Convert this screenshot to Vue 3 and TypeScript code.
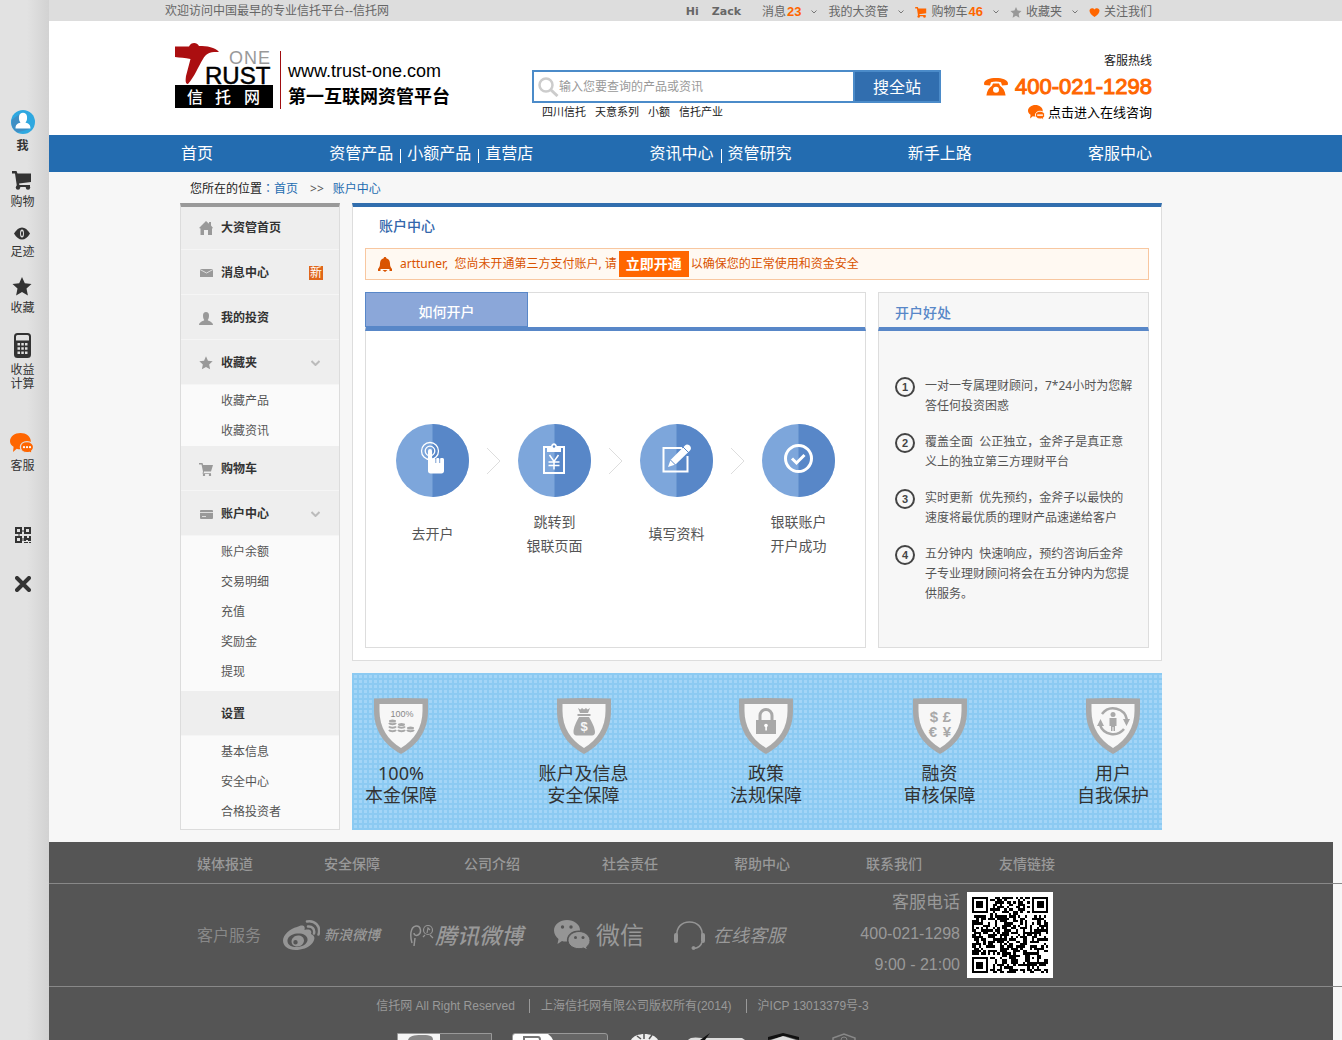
<script setup lang="ts">
import { ref } from 'vue'

interface MenuGroup {
  label: string
  icon?: string
  badge?: string
  open?: boolean
  roomy?: boolean
  children?: string[]
}

const keyword = ref('')

const navGroups: string[][] = [
  ['首页'],
  ['资管产品', '小额产品', '直营店'],
  ['资讯中心', '资管研究'],
  ['新手上路'],
  ['客服中心'],
]

const hotWords = ['四川信托', '天意系列', '小额', '信托产业']

const menu: MenuGroup[] = [
  { label: '大资管首页', icon: 'home' },
  { label: '消息中心', icon: 'mail', badge: '新' },
  { label: '我的投资', icon: 'user' },
  { label: '收藏夹', icon: 'star', open: true, children: ['收藏产品', '收藏资讯'] },
  { label: '购物车', icon: 'cart' },
  {
    label: '账户中心',
    icon: 'card',
    open: true,
    roomy: true,
    children: ['账户余额', '交易明细', '充值', '奖励金', '提现'],
  },
  { label: '设置', roomy: true, children: ['基本信息', '安全中心', '合格投资者'] },
]

const steps = [
  { icon: 'touch', lines: ['去开户'] },
  { icon: 'form', lines: ['跳转到', '银联页面'] },
  { icon: 'edit', lines: ['填写资料'] },
  { icon: 'done', lines: ['银联账户', '开户成功'] },
]

const benefits = [
  '一对一专属理财顾问，7*24小时为您解\n答任何投资困惑',
  '覆盖全面  公正独立，金斧子是真正意\n义上的独立第三方理财平台',
  '实时更新  优先预约，金斧子以最快的\n速度将最优质的理财产品速递给客户',
  '五分钟内  快速响应，预约咨询后金斧\n子专业理财顾问将会在五分钟内为您提\n供服务。',
]

const guarantees = [
  { icon: 'coins', lines: ['100%', '本金保障'] },
  { icon: 'bag', lines: ['账户及信息', '安全保障'] },
  { icon: 'lock', lines: ['政策', '法规保障'] },
  { icon: 'money', lines: ['融资', '审核保障'] },
  { icon: 'self', lines: ['用户', '自我保护'] },
]

const footLinks = ['媒体报道', '安全保障', '公司介绍', '社会责任', '帮助中心', '联系我们', '友情链接']

const QR_SIZE = 33

function ring(x: number, y: number, cx: number, cy: number): number {
  return Math.max(Math.abs(x - cx), Math.abs(y - cy))
}

function buildQr(): string {
  let seed = 20141
  let d = ''
  const last = QR_SIZE - 4
  for (let y = 0; y < QR_SIZE; y++) {
    for (let x = 0; x < QR_SIZE; x++) {
      seed = (seed * 1103515245 + 12345) % 2147483648
      let on = seed / 2147483648 > 0.48
      const finder = Math.min(ring(x, y, 3, 3), ring(x, y, last, 3), ring(x, y, 3, last))
      const align = ring(x, y, 26, 26)
      if (finder <= 4) on = finder <= 1 || finder === 3
      else if (align <= 2) on = align !== 1
      if (on) d += `M${x} ${y}h1v1h-1z`
    }
  }
  return d
}

const qrPath = buildQr()
</script>

<template>
  <div class="page">
    <aside class="rail" aria-label="快捷工具">
      <a href="#" class="tool tool--me">
        <svg width="24" height="24" viewBox="0 0 24 24"><circle cx="12" cy="12" r="12" fill="#2fa8e0" /><path d="M9 4 1 9.500a12 12 0 0 0 5 12.900L19 19z" fill="#3f8fc4" /><path d="M4.500 18.500c0-4 2-5 5-6C8 11 7.800 9 8 6.500 8.300 4 9.800 2.800 12 2.800s3.700 1.200 4 3.700c.2 2.500 0 4.500-1.500 6 3 1 5 2 5 6z" fill="#fff" /></svg>
        <span>我</span>
      </a>
      <a href="#" class="tool">
        <svg width="20" height="19" viewBox="0 0 20 19" fill="#333"><path d="M0 0h4.500l1 2.500H19V11L7 12.500l.4 1.500H18v2H5L3 2.500H0z" /><circle cx="6" cy="16.500" r="2.200" /><circle cx="16" cy="16.500" r="2.200" /></svg>
        <span>购物</span>
      </a>
      <a href="#" class="tool">
        <svg width="16" height="13" viewBox="0 0 16 13"><path d="M0 6.500C2.500 2.500 5 .5 8 .5s5.500 2 8 6c-2.500 4-5 6-8 6s-5.500-2-8-6z" fill="#333" /><ellipse cx="8" cy="6.500" rx="2" ry="4" fill="#e0e0e0" /><ellipse cx="8" cy="6.500" rx="1" ry="2.500" fill="#333" /></svg>
        <span>足迹</span>
      </a>
      <a href="#" class="tool">
        <svg width="20" height="19" viewBox="0 0 20 19"><path d="m10 0 2.800 6.200 6.700.8-5 4.600 1.400 6.900L10 15.100l-5.900 3.400 1.400-6.900L.5 7l6.700-.8z" fill="#333" /></svg>
        <span>收藏</span>
      </a>
      <a href="#" class="tool">
        <svg width="17" height="25" viewBox="0 0 17 25"><rect x="1" y="1" width="15" height="23" rx="2.500" fill="none" stroke="#333" stroke-width="2" /><path d="M2 7.500h13V23H2z" fill="#333" /><path d="M3.500 10h2.500v2.500H3.500zM7.300 10h2.500v2.500H7.300zM11 10h2.500v2.500H11zM3.500 14.200h2.500v2.500H3.500zM7.300 14.200h2.500v2.500H7.300zM11 14.200h2.500v2.500H11zM3.500 18.400h2.500v2.500H3.500zM7.300 18.400h2.500v2.500H7.300zM11 18.400h2.500v2.500H11z" fill="#e0e0e0" /></svg>
        <span>收益<br />计算</span>
      </a>
      <a href="#" class="tool tool--chat">
        <svg width="24" height="21" viewBox="0 0 24 21"><path d="M10.500 0C16 0 20.800 3.400 20.800 8.200S16 16.300 10.500 16.300c-1.500 0-2.600-.2-3.800-.6L3 19l.6-5.200C1.500 12.500 0 10.500 0 8.200 0 3.400 4.800 0 10.500 0z" fill="#ff6600" /><path d="M17 8.700c3.900 0 6.600 2.400 6.600 5.400 0 1.700-.7 3-1.900 4l.5 2.600-2.700-1.300c-.8.200-1.600.3-2.500.3-3.900 0-6.600-2.400-6.600-5.600s2.700-5.400 6.600-5.400z" fill="#ff6600" stroke="#e0e0e0" stroke-width="1.300" /><circle cx="14" cy="14.200" r="1.100" fill="#fff" /><circle cx="17" cy="14.200" r="1.100" fill="#fff" /><circle cx="20" cy="14.200" r="1.100" fill="#fff" /></svg>
        <span>客服</span>
      </a>
      <a href="#" class="tool tool--qr" aria-label="二维码">
        <svg width="16" height="16" viewBox="0 0 16 16"><path fill="#333" fill-rule="evenodd" d="M0 0h7v7H0zM2 2v3h3V2zM9 0h7v7H9zM11 2v3h3V2zM0 9h7v7H0zM2 11v3h3v-3zM9 9h3v2h2V9h2v5h-3v-1h-2v1H9zM9 15h4v1H9zM14 15h2v1h-2zM7.500 3h1v2h-1zM3 7.500h2v1H3zM7.500 11h1v3h-1z" /></svg>
      </a>
      <button type="button" class="tool tool--close" aria-label="关闭">
        <svg width="16" height="16" viewBox="0 0 16 16"><path d="m2 2 12 12M14 2 2 14" stroke="#333" stroke-width="4" stroke-linecap="round" /></svg>
      </button>
    </aside>

    <div class="topbar">
      <div class="wide topbar__in">
        <span>欢迎访问中国最早的专业信托平台--信托网</span>
        <div class="topbar__links">
          <span class="hi">Hi</span>
          <a href="#" class="hi hi--name">Zack</a>
          <a href="#">消息<b>23</b></a>
          <svg class="caret" width="6" height="4" viewBox="0 0 6 4"><path d="m.5.5 2.500 2.500L5.500.5" fill="none" stroke="#777" /></svg>
          <a href="#">我的大资管</a>
          <svg class="caret" width="6" height="4" viewBox="0 0 6 4"><path d="m.5.5 2.500 2.500L5.500.5" fill="none" stroke="#777" /></svg>
          <a href="#"><svg width="12" height="11" viewBox="0 0 20 19" fill="#ff6600"><path d="M0 0h4.500l1 2.500H19V11L7 12.500l.4 1.500H18v2H5L3 2.500H0z" /><circle cx="6" cy="16.500" r="2.200" /><circle cx="16" cy="16.500" r="2.200" /></svg>购物车<b>46</b></a>
          <svg class="caret" width="6" height="4" viewBox="0 0 6 4"><path d="m.5.5 2.500 2.500L5.500.5" fill="none" stroke="#777" /></svg>
          <a href="#"><svg width="12" height="11" viewBox="0 0 20 19"><path d="m10 0 2.800 6.200 6.700.8-5 4.600 1.400 6.900L10 15.100l-5.900 3.400 1.400-6.900L.5 7l6.700-.8z" fill="#999" /></svg>收藏夹</a>
          <svg class="caret" width="6" height="4" viewBox="0 0 6 4"><path d="m.5.5 2.500 2.500L5.500.5" fill="none" stroke="#777" /></svg>
          <a href="#"><svg width="11" height="9" viewBox="0 0 11 9"><path d="M5.500 9C2.500 7 .5 5 .5 2.800.5 1.200 1.600.2 3 .2c1.100 0 2 .5 2.500 1.400C6 .7 6.900.2 8 .2c1.400 0 2.500 1 2.500 2.600C10.500 5 8.500 7 5.500 9z" fill="#ff6600" /></svg>关注我们</a>
        </div>
      </div>
    </div>

    <header class="header">
      <div class="wide header__in">
        <a href="#" class="brand">
          <svg class="brand__logo" width="98" height="66" viewBox="0 0 98 66">
            <path d="M0 3.500h14c2-4.500 8-4.500 10-.5 8 0 16 1 20 6-8-.5-13 1-16 7-5 8-8 17-15 25-3 0-2.500-4-2-8L15.500 16C10 14.500 5 15 0 14z" fill="#ab0e10" />
            <text x="54" y="21" font-size="18" letter-spacing="1" fill="#999">ONE</text>
            <text x="30" y="41" font-size="24" fill="#000" stroke="#000" stroke-width=".5">RUST</text>
            <path d="M0 42h98v23H0z" fill="#000" />
            <text class="cjk" x="12 40 69" y="60" font-size="16" font-weight="500" fill="#fff">信托网</text>
          </svg>
          <span class="brand__text">
            <span class="brand__url">www.trust-one.com</span>
            <strong>第一互联网资管平台</strong>
          </span>
        </a>

        <div class="search">
          <form class="search__box" @submit.prevent>
            <svg width="21" height="20" viewBox="0 0 21 20" fill="none" stroke="#ccc"><circle cx="8" cy="8" r="6.500" stroke-width="2.500" /><path d="m13 13 6.500 6" stroke-width="3" /></svg>
            <input v-model="keyword" type="text" aria-label="搜索" placeholder="输入您要查询的产品或资讯" />
            <button type="submit">搜全站</button>
          </form>
          <div class="search__hot">
            <a v-for="w in hotWords" :key="w" href="#">{{ w }}</a>
          </div>
        </div>

        <div class="hotline">
          <span>客服热线</span>
          <strong>
            <svg width="24" height="18" viewBox="0 0 24 18"><path d="M12 0c6.500 0 11 1.700 12 5l-.3 2-5.700.5-1-3.200c-3-1-7-1-10 0L6 7.500.3 7 0 5C1 1.700 5.500 0 12 0z" fill="#ff6600" /><path d="M9 5.500h6l1 2.200c3 2 5 5 5.600 9.800H2.400C3 12.700 5 9.700 8 7.700z" fill="#ff6600" /><circle cx="12" cy="11.700" r="3" fill="#fff" /></svg>
            400-021-1298
          </strong>
          <a href="#">
            <svg width="17" height="15" viewBox="0 0 24 21"><path d="M10.500 0C16 0 20.800 3.400 20.800 8.200S16 16.300 10.500 16.300c-1.500 0-2.600-.2-3.800-.6L3 19l.6-5.200C1.500 12.500 0 10.500 0 8.200 0 3.400 4.800 0 10.500 0z" fill="#ff6600" /><path d="M17 8.700c3.900 0 6.600 2.400 6.600 5.400 0 1.700-.7 3-1.900 4l.5 2.600-2.700-1.300c-.8.200-1.600.3-2.500.3-3.900 0-6.600-2.400-6.600-5.600s2.700-5.400 6.600-5.400z" fill="#ff6600" stroke="#fff" stroke-width="1.300" /><path d="M13 14.200h8" stroke="#fff" stroke-width="2" /></svg>
            点击进入在线咨询
          </a>
        </div>
      </div>
    </header>

    <nav class="nav">
      <div class="wide nav__in">
        <div v-for="(g, i) in navGroups" :key="i" class="nav__group">
          <a v-for="n in g" :key="n" href="#">{{ n }}</a>
        </div>
      </div>
    </nav>

    <div class="shell">
      <div class="crumbs">
        <span>您所在的位置</span><a href="#"><span class="colon">：</span>首页</a><i>&gt;&gt;</i><a href="#">账户中心</a>
      </div>

      <div class="columns">
        <aside class="side">
          <template v-for="g in menu" :key="g.label">
            <a href="#" class="side__head">
              <span class="side__icon">
                <svg v-if="g.icon === 'home'" width="14" height="14" viewBox="0 0 14 14"><path d="m7 0 3 2.800V1h2v3.600L14 7l-1 .6V14H9V9H5v5H1.500V7.600L0 7z" /></svg>
                <svg v-else-if="g.icon === 'mail'" width="13" height="8" viewBox="0 0 13 8"><path d="M0 0h13v8H0z" /><path d="M0 .5 6.500 4 13 .5" fill="none" stroke="#ddd" /></svg>
                <svg v-else-if="g.icon === 'user'" width="14" height="13" viewBox="0 0 14 13"><path d="M7 0c2 0 3 1.500 3 3.500S9.500 7 8.700 8c0 1 5.300 1.500 5.300 5H0c0-3.500 5.300-4 5.300-5C4.500 7 4 5.500 4 3.500S5 0 7 0z" /></svg>
                <svg v-else-if="g.icon === 'star'" width="14" height="14" viewBox="0 0 20 19"><path d="m10 0 2.800 6.200 6.700.8-5 4.600 1.400 6.900L10 15.100l-5.900 3.400 1.400-6.900L.5 7l6.700-.8z" /></svg>
                <svg v-else-if="g.icon === 'cart'" width="14" height="13" viewBox="0 0 14 13"><path d="M0 0h3.500l.7 2H14l-2 6.500H5L4.700 10H12v.8H3.500L4 8.500 2.500 1.500H0z" /><circle cx="5" cy="12" r="1.200" /><circle cx="11" cy="12" r="1.200" /></svg>
                <svg v-else-if="g.icon === 'card'" width="13" height="9" viewBox="0 0 13 9"><rect width="13" height="9" rx="1" /><path d="M0 2.500h13M2 6.500h4" stroke="#ddd" /></svg>
              </span>
              {{ g.label }}
              <em v-if="g.badge">{{ g.badge }}</em>
              <svg v-if="g.open" class="side__caret" width="9" height="6" viewBox="0 0 9 6"><path d="m.5 1 4 4 4-4" fill="none" stroke="#bbb" stroke-width="2" /></svg>
            </a>
            <ul v-if="g.children" class="side__sub" :class="{ 'side__sub--roomy': g.roomy }">
              <li v-for="c in g.children" :key="c"><a href="#">{{ c }}</a></li>
            </ul>
          </template>
        </aside>

        <main class="main">
          <section class="card">
            <h1>账户中心</h1>
            <div class="alert">
              <svg width="14" height="15" viewBox="0 0 14 15" fill="#d95300"><path d="M7 0c.8 0 1.300.5 1.300 1.200C10.700 1.800 12 3.700 12 6.500c0 2.500.5 3.500 2 5.500H0c1.500-2 2-3 2-5.500 0-2.800 1.300-4.700 3.700-5.300C5.700.5 6.200 0 7 0z" /><path d="M0 12h2.500v2H0zM11.500 12H14v2h-2.500zM4.500 13h5L7 15z" /></svg>
              <span class="alert__text">arttuner,&nbsp; 您尚未开通第三方支付账户, 请</span>
              <button type="button">立即开通</button>
              <span>以确保您的正常使用和资金安全</span>
            </div>

            <div class="panels">
              <section class="panel panel--steps">
                <div class="panel__head"><button type="button" class="tab">如何开户</button></div>
                <div class="panel__body steps">
                  <template v-for="(s, i) in steps" :key="s.icon">
                    <svg v-if="i > 0" class="steps__arrow" width="15" height="28" viewBox="0 0 15 28"><path d="m1 1 13 13L1 27" fill="none" stroke="#ddd" /></svg>
                    <div class="step">
                      <svg width="73" height="73" viewBox="0 0 73 73">
                        <circle cx="36.500" cy="36.500" r="36.500" fill="#7da6db" />
                        <path d="M36.500 0a36.500 36.500 0 0 1 0 73z" fill="#5887c8" />
                        <g v-if="s.icon === 'touch'">
                          <circle cx="34" cy="27" r="8.500" fill="none" stroke="#fff" stroke-width="1.300" />
                          <circle cx="34" cy="27" r="4.800" fill="none" stroke="#fff" stroke-width="1.300" />
                          <path d="M32 27a2 2 0 0 1 4 0v8c.5-1.300 3.500-1.300 3.800 0 .5-1.300 3.500-1.300 3.800 0 .6-1.300 4.400-1.300 4.400.5V47c0 1.500-1 2.500-2.500 2.500h-11c-1.500 0-2.500-1-2.500-2.500z" fill="#fff" />
                          <path d="M39.800 34v5M43.700 34v5" stroke="#5887c8" stroke-width=".8" />
                        </g>
                        <g v-else-if="s.icon === 'form'" fill="none" stroke="#fff">
                          <rect x="26" y="23" width="20" height="26" stroke-width="2" />
                          <path d="M29 28v-5h4c0-5 6-5 6 0h4v5z" fill="#fff" stroke="none" />
                          <circle cx="36" cy="22.500" r="1.200" fill="#5887c8" stroke="none" />
                          <path d="m31.500 31 4.500 6.500 4.500-6.500M36 37v8.500M30.500 38h11M30.500 41.500h11" stroke-width="1.500" />
                        </g>
                        <g v-else-if="s.icon === 'edit'">
                          <path d="M42 24H23.500v23.500h24V32" fill="none" stroke="#fff" stroke-width="2" />
                          <path d="m28 43 2.500-7L45 21.500c3-3 8 2 5 5L35.500 40.500z" fill="#fff" />
                          <path d="m43 23 6 6M30.500 36l5 5" stroke="#5887c8" />
                        </g>
                        <g v-else fill="none" stroke="#fff">
                          <circle cx="36.500" cy="34.500" r="13" stroke-width="3" />
                          <path d="m30 34.500 4.500 4.500 8-8" stroke-width="3" />
                        </g>
                      </svg>
                      <p><span v-for="l in s.lines" :key="l">{{ l }}</span></p>
                    </div>
                  </template>
                </div>
              </section>

              <section class="panel panel--why">
                <h2 class="panel__head">开户好处</h2>
                <ol class="panel__body why">
                  <li v-for="(b, i) in benefits" :key="i"><b>{{ i + 1 }}</b><p>{{ b }}</p></li>
                </ol>
              </section>
            </div>
          </section>

          <section class="banner">
            <div v-for="g in guarantees" :key="g.icon" class="pledge">
              <svg width="54" height="56" viewBox="0 0 54 56">
                <path d="M0 .5Q27-.5 54 .5V13c0 19-10 34-27 43C10 47 0 32 0 13z" fill="#a8a8a8" />
                <path d="M5.500 6h43v7c0 16-8 29-21.500 37C13.500 42 5.500 29 5.500 13z" fill="#f7f7f7" />
                <g v-if="g.icon === 'coins'" fill="#a8a8a8">
                  <text x="28" y="19" font-size="9" text-anchor="middle" fill="#888">100%</text>
                  <g fill="none" stroke="#a8a8a8" stroke-width="2"><path d="M15 25c1 1.500 6 1.500 7 0M15 28.500c1 1.500 6 1.500 7 0M15 32c1 1.500 6 1.500 7 0M24 28.500c1 1.500 6 1.500 7 0M24 32c1 1.500 6 1.500 7 0M33 32c1 1.500 6 1.500 7 0" /></g>
                  <ellipse cx="18.500" cy="23" rx="3.500" ry="1.500" /><ellipse cx="27.500" cy="26.500" rx="3.500" ry="1.500" /><ellipse cx="36.500" cy="30" rx="3.500" ry="1.500" />
                </g>
                <g v-else-if="g.icon === 'bag'" fill="#a8a8a8">
                  <path d="M21 10l2.500 1.500L25 10l2 1.500 2-1.500 1.500 1.500L33 10l-2 5h-8zM20.500 16h13v2h-13zM22 19h10c3 5 6 11 6 15 0 2-1 3.500-3 3.500H19.500c-2 0-3-1.500-3-3.500 0-4 2.500-10 5.500-15z" />
                  <text x="27" y="33" font-size="13" font-weight="700" text-anchor="middle" fill="#f7f7f7">$</text>
                </g>
                <g v-else-if="g.icon === 'lock'">
                  <path d="M17 22h20v14H17z" fill="#a8a8a8" />
                  <path d="M21 22v-4.500a6 6 0 0 1 12 0V22" fill="none" stroke="#a8a8a8" stroke-width="3" />
                  <path d="M26.300 28.500h1.600v4h-1.600z" fill="#fff" /><circle cx="27" cy="27.500" r="1.800" fill="#fff" />
                </g>
                <g v-else-if="g.icon === 'money'" font-size="15" font-weight="700" text-anchor="middle" fill="#a8a8a8">
                  <text x="21" y="24">$</text><text x="34" y="24">£</text>
                  <text x="20" y="39">€</text><text x="34" y="39">¥</text>
                </g>
                <g v-else fill="#a8a8a8">
                  <path d="M16 16a14 14 0 0 1 25 6M38 31a14 14 0 0 1-24-4" fill="none" stroke="#a8a8a8" stroke-width="2.500" />
                  <path d="M37 21h7l-3.500 7zM11 28h7l-3.500-7z" />
                  <circle cx="27" cy="16.500" r="2.500" /><path d="M23.500 20h7v8H29v5h-1.500v-4h-1v4H25v-5h-1.500z" />
                </g>
              </svg>
              <p><span v-for="l in g.lines" :key="l">{{ l }}</span></p>
            </div>
          </section>
        </main>
      </div>
    </div>

    <footer class="footer">
      <div class="footer__row">
        <nav class="shell foot-links"><a v-for="l in footLinks" :key="l" href="#">{{ l }}</a></nav>
      </div>
      <div class="footer__row">
        <div class="shell service">
          <span class="service__title">客户服务</span>
          <a href="#" class="social social--sina">
            <svg width="37" height="30" viewBox="0 0 37 30" fill="#959595"><path fill-rule="evenodd" d="M14 7c4-2.500 9-2.500 7.500 3 5-1.500 8 .5 6.500 4 4 1.500 4.500 5 1.500 9-4 5-11 7-17 7C5 30 0 26 0 20.500 0 15 7 8.500 14 7zM14 13.500c-6 .5-10 4-9.500 8s5 6 10.500 5.500c6-.7 10-4 9.500-8s-5-6-10.500-5.500z" /><path fill-rule="evenodd" d="M15 15.500c3.500 0 6 2 6 5s-3 6-6.500 6-6-2-6-5 3-6 6.500-6zM12.500 20a2.200 2.200 0 1 0 0 4.400 2.200 2.200 0 0 0 0-4.400z" /><path d="M25 6.500c4-.5 7 2.500 6 7M24 1.500c8-1.500 14 5 11.500 13" fill="none" stroke="#959595" stroke-width="2.500" stroke-linecap="round" /></svg>
            新浪微博
          </a>
          <a href="#" class="social social--tencent">
            <svg width="24" height="24" viewBox="0 0 24 24" fill="none" stroke="#959595" stroke-width="1.500"><path d="M2 20C0 13 0 4 6 3c5-.5 6 7 2 9-2 1-4 0-4-2M4 23l1-8" /><circle cx="18" cy="7" r="4.500" stroke-width="1.200" /><path d="m17 10 1-5 2 2M20 12l3 3M15 12l-2 2" stroke-width="1.200" /></svg>
            腾讯微博
          </a>
          <a href="#" class="social social--wechat">
            <svg width="36" height="30" viewBox="0 0 36 30" fill="#959595"><path d="M13 0c7 0 13 4.500 13 10v.5C18 10 12 15 13 21.500c-2 .2-3.500 0-5-.5l-4.500 3 1-5C2 17 0 14 0 10.500 0 4.500 6 0 13 0z" /><path d="M25 11.500c6 0 11 4 11 9 0 2.700-1.300 5-3.500 6.500l1 3-4-2c-1.500.5-3 .7-4.500.7-6 0-11-3.700-11-8.500s5-8.700 11-8.700z" stroke="#555" stroke-width="1" /><g fill="#555"><circle cx="8.500" cy="7" r="1.700" /><circle cx="17" cy="7" r="1.700" /><circle cx="21.500" cy="17.500" r="1.500" /><circle cx="29" cy="17.500" r="1.500" /></g></svg>
            微信
          </a>
          <a href="#" class="social social--online">
            <svg width="31" height="29" viewBox="0 0 31 29" fill="none" stroke="#959595"><path d="M3 15C2 6 8 1 15.500 1S29 6 28 15" stroke-width="1.500" /><path d="M2 14v6M29 14v6" stroke-width="4" stroke-linecap="round" /><path d="M28 21c-1 4-4 6-8 6.500" stroke-width="1.500" /><circle cx="19.500" cy="27" r="1.500" fill="#959595" /></svg>
            在线客服
          </a>
          <div class="service__phone">
            <span class="service__label">客服电话</span><span>400-021-1298</span><span>9:00 - 21:00</span>
          </div>
          <svg class="qr" width="86" height="86" :viewBox="`-2 -2 ${QR_SIZE + 4} ${QR_SIZE + 4}`" shape-rendering="crispEdges"><path d="M-2-2h40v40h-40z" fill="#fff" /><path :d="qrPath" fill="#000" /></svg>
        </div>
      </div>
      <div class="legal">
        <span>信托网 All Right Reserved</span><span>上海信托网有限公司版权所有(2014)</span><span>沪ICP 13013379号-3</span>
      </div>
      <svg class="seals" width="460" height="7" viewBox="0 0 460 7">
        <path d="M.5 8V.5h94V8" fill="#666" stroke="#999" /><path d="M1 1h42v6H1z" fill="#f5f5f5" /><path d="M11 7c1-4 6-5 13-5s12 0 12 5z" fill="#888" />
        <path d="M115.500 8V3q0-2.500 2.500-2.500h90q2.500 0 2.500 2.500v5" fill="#666" stroke="#999" /><path d="M116 7V3q0-2 2-2h33q3 2 5 6z" fill="#fff" /><path d="M127 7V4h14q2 0 2 3" fill="none" stroke="#777" stroke-width="2" />
        <path d="M234 7c4-8 23-8 27 0z" fill="#eee" /><path d="M240 3l4 3M247 1v5M255 2l-3 4" stroke="#555" stroke-width="1.500" />
        <path d="M291 7c2-3 8-3 14-2h40l3 2z" fill="#ddd" /><path d="M303 7l10-7-5 7z" fill="#111" />
        <path d="M371 4 386 0l16 4v3l-14-4-17 4z" fill="#111" /><path d="M374 7l12-4 13 4z" fill="#ddd" />
        <path d="m436 5 11-4 11 4v3h-22z" fill="none" stroke="#888" stroke-width="1.500" /><circle cx="447" cy="7" r="3" fill="none" stroke="#888" />
      </svg>
    </footer>
  </div>
</template>

<style>
body {
  margin: 0;
  background: #f7f7f7;
}
</style>

<style scoped>
.page {
  font: 12px/20px 'Noto Sans', 'Noto Sans CJK SC', sans-serif;
  color: #555;
  min-width: 1060px;
}
.page * {
  box-sizing: border-box;
}
a {
  color: inherit;
  text-decoration: none;
}
button {
  border: 0;
  margin: 0;
  padding: 0;
  font: inherit;
  color: inherit;
  background: none;
  cursor: pointer;
}
p, h1, h2, ul, ol {
  margin: 0;
  padding: 0;
  list-style: none;
}
svg {
  flex: none;
}
svg text {
  font-family: 'Liberation Sans', Arial, sans-serif;
}
svg text.cjk {
  font-family: 'Noto Sans CJK SC', sans-serif;
}
.wide {
  max-width: 1012px;
  margin: 0 auto;
}
.shell {
  max-width: 982px;
  margin: 0 auto;
}

/* floating tool rail */
.rail {
  position: fixed;
  z-index: 2;
  inset: 0 auto 0 0;
  width: 49px;
  padding: 110px 4px 0 0;
  display: flex;
  flex-direction: column;
  align-items: center;
  gap: 18px;
  background: linear-gradient(90deg, #e2e2e2 55%, #d2d2d2);
}
.tool {
  display: flex;
  flex-direction: column;
  align-items: center;
  gap: 5px;
  line-height: 14px;
  color: #333;
}
.tool--me {
  font-weight: 700;
}
.tool--chat {
  margin-top: 24px;
}
.tool--qr {
  margin-top: 36px;
}
.tool--close {
  margin-top: 15px;
}

/* top bar */
.topbar {
  background: #ddd;
  color: #666;
  font-family: 'Liberation Sans', 'Noto Sans CJK SC', sans-serif;
}
.topbar__in {
  display: flex;
  justify-content: space-between;
  height: 21px;
  line-height: 20px;
  padding: 1px 25px 0 0;
}
.topbar__links,
.topbar__links a {
  display: flex;
  align-items: center;
}
.topbar__links {
  padding-top: 2px;
}
.topbar__links a {
  gap: 4px;
}
.topbar__links b {
  margin-left: -3px;
  font-size: 13px;
  color: #ff6600;
}
.topbar__links .hi {
  margin-right: 13px;
  font: 700 11px/20px 'DejaVu Sans', sans-serif;
}
.topbar__links .hi--name {
  margin-right: 21px;
}
.caret {
  margin: 0 11px 0 10px;
}

/* header */
.header {
  background: #fff;
}
.header__in {
  display: flex;
  align-items: flex-start;
  height: 114px;
  padding: 22px 25px 0 10px;
}
.brand {
  display: flex;
  color: #000;
}
.brand__text {
  display: flex;
  flex-direction: column;
  margin: 8px 0 0 7px;
  padding: 8px 0 0 7px;
  border-left: 1px solid #a00d10;
  height: 58px;
}
.brand__url {
  font: 18px/24px 'Liberation Sans', Arial, sans-serif;
}
.brand__text strong {
  font-size: 18px;
  line-height: 26px;
}
.search {
  width: 409px;
  margin: 27px 0 0 82px;
}
.search__box {
  display: flex;
  align-items: center;
  height: 33px;
  padding-left: 4px;
  border: 2px solid #4b8bc9;
}
.search__box input {
  flex: 1;
  min-width: 0;
  padding: 0;
  border: 0;
  outline: 0;
  font: inherit;
  color: #333;
}
.search__box input::placeholder {
  color: #999;
  opacity: 1;
}
.search__box button {
  align-self: stretch;
  width: 86px;
  border-left: 2px solid #4b8bc9;
  background: #316eaf;
  color: #fff;
  font-size: 16px;
}
.search__hot {
  display: flex;
  gap: 9px;
  padding-left: 10px;
  font-size: 11px;
  line-height: 18px;
  color: #222;
}
.hotline {
  display: flex;
  flex-direction: column;
  align-items: flex-end;
  margin: 8px 0 0 auto;
  color: #222;
}
.hotline strong {
  display: flex;
  align-items: center;
  gap: 7px;
  margin: 4px 0 3px;
  font: 22px/24px 'Liberation Sans', Arial, sans-serif;
  color: #ff6600;
  -webkit-text-stroke: 1px #ff6600;
}
.hotline a {
  display: flex;
  align-items: center;
  gap: 3px;
  font-size: 13px;
  color: #000;
}

/* main navigation */
.nav {
  background: #236cb0;
  color: #fff;
  font-size: 16px;
  line-height: 37px;
}
.nav__in {
  display: flex;
  justify-content: space-between;
  padding: 0 25px 0 16px;
}
.nav__group {
  display: flex;
}
.nav__group a + a {
  display: flex;
  align-items: center;
}
.nav__group a + a::before {
  content: '';
  width: 1px;
  height: 14px;
  margin: 4px 6px 0 7px;
  background: #fff;
}

.crumbs {
  height: 31px;
  padding-left: 10px;
  line-height: 31px;
  color: #222;
}
.crumbs a {
  color: #236cb0;
}
.crumbs i {
  margin: 0 9px 0 12px;
  font-style: normal;
  color: #555;
}
.colon {
  font-family: 'Noto Sans CJK TC', sans-serif;
}

.columns {
  display: flex;
  gap: 12px;
  padding-bottom: 12px;
}

/* side menu */
.side {
  flex: none;
  width: 160px;
  border: 1px solid #dcdcdc;
  border-top: 4px solid #999;
  background: #fafafa;
}
.side__head {
  display: flex;
  align-items: center;
  height: 45px;
  padding: 2px 16px 0 0;
  border-bottom: 1px solid #f5f5f5;
  background: #eee;
  font-weight: 700;
  color: #333;
}
.side__head:first-child {
  height: 43px;
  padding-top: 0;
}
.side__icon {
  display: flex;
  justify-content: center;
  width: 14px;
  margin: 0 8px 0 18px;
  fill: #999;
}
.side__head em {
  width: 14px;
  margin-left: auto;
  background: #e0661a;
  color: #fff;
  font-style: normal;
  font-weight: 400;
  line-height: 14px;
  text-align: center;
}
.side__caret {
  margin: 0 3px 0 auto;
}
.side__sub {
  padding: 1px 0 0 40px;
  line-height: 30px;
}
.side__sub--roomy {
  padding-bottom: 4px;
}
.side__sub--roomy:last-child {
  padding-bottom: 2px;
}

/* account card */
.main {
  flex: 1;
  min-width: 0;
}
.card {
  padding: 0 12px 12px;
  border: 1px solid #ddd;
  border-top: 4px solid #316eae;
  background: #fff;
}
h1 {
  margin-bottom: 3px;
  padding-left: 14px;
  font-size: 14px;
  font-weight: 500;
  line-height: 38px;
  color: #3467ac;
}
.alert {
  display: flex;
  align-items: center;
  height: 32px;
  padding-left: 12px;
  border: 1px solid #f8c7a0;
  background: #fff9f2;
  color: #d95300;
}
.alert__text {
  margin-left: 8px;
}
.alert button {
  width: 70px;
  height: 26px;
  margin: 0 2px;
  background: #ff6600;
  color: #fff;
  font-size: 14px;
  font-weight: 700;
}
.panels {
  display: flex;
  gap: 12px;
  margin-top: 12px;
}
.panel {
  display: flex;
  flex-direction: column;
}
.panel--steps {
  flex: 1;
}
.panel--why {
  width: 271px;
  background: #f7f7f7;
}
.panel__head {
  height: 39px;
  border: 1px solid #ddd;
  border-bottom: 4px solid #5887c8;
  font-size: 14px;
  font-weight: 500;
  line-height: 40px;
  color: #5887c8;
}
h2.panel__head {
  padding-left: 16px;
}
.tab {
  display: block;
  width: 163px;
  height: 35px;
  margin: -1px 0 0 -1px;
  border: 1px solid #5887c8;
  background: #8ba7d9;
  color: #fff;
  line-height: 37px;
}
.panel__body {
  flex: 1;
  border: 1px solid #ddd;
  border-top: 0;
}
.steps {
  display: flex;
  justify-content: center;
  gap: 17px;
  padding: 93px 0 89px;
}
.steps__arrow {
  margin-top: 23px;
}
.step {
  width: 73px;
}
.step svg {
  display: block;
}
.step p {
  display: flex;
  flex-direction: column;
  justify-content: center;
  height: 48px;
  margin-top: 13px;
  font-size: 14px;
  line-height: 24px;
  text-align: center;
}
.why {
  display: flex;
  flex-direction: column;
  gap: 16px;
  padding: 45px 0 0 16px;
}
.why li {
  display: flex;
}
.why b {
  flex: none;
  width: 20px;
  height: 20px;
  margin: 1px 10px 0 0;
  border: 2px solid #444;
  border-radius: 50%;
  font: 700 11px/16px 'Liberation Sans', Arial, sans-serif;
  color: #444;
  text-align: center;
}
.why p {
  white-space: pre;
}

/* guarantees */
.banner {
  display: flex;
  justify-content: space-between;
  margin-top: 12px;
  padding: 25px 13px 24px;
  background:
    repeating-linear-gradient(90deg, #8ccaf2 0 2px, transparent 2px 5px),
    repeating-linear-gradient(#8ccaf2 0 2px, #a3d5f7 2px 5px);
}
.pledge {
  display: flex;
  flex-direction: column;
  align-items: center;
  gap: 8px;
  color: #333;
}
.pledge p {
  display: flex;
  flex-direction: column;
  font-size: 18px;
  line-height: 22px;
  text-align: center;
}

/* footer */
.footer {
  background: linear-gradient(#555, #555) no-repeat left / calc(100% - 9px) 100%;
  color: #999;
}
.footer__row {
  border-bottom: 1px solid #888;
}
.foot-links {
  display: grid;
  grid-template-columns: 127px 140px 138px 132px 132px 133px auto;
  padding-left: 17px;
  height: 41px;
  font-size: 14px;
  font-weight: 500;
  line-height: 44px;
}
.service {
  display: flex;
  align-items: center;
  height: 102px;
  padding-left: 17px;
}
.service__title {
  font-size: 16px;
  color: #888;
}
.social {
  display: flex;
  align-items: center;
  gap: 4px;
}
.social--sina {
  margin-left: 22px;
  font-size: 14px;
  font-style: italic;
  font-weight: 500;
}
.social--tencent {
  margin-left: 30px;
  gap: 1px;
  font-size: 22px;
  font-style: italic;
  font-weight: 500;
}
.social--wechat {
  margin-left: 31px;
  gap: 6px;
  font-size: 24px;
}
.social--online {
  margin-left: 30px;
  gap: 8px;
  font-size: 18px;
  font-style: italic;
}
.service__phone {
  display: flex;
  flex-direction: column;
  margin-left: auto;
  padding-bottom: 4px;
  font: 16px/31px 'Liberation Sans', 'Noto Sans CJK SC', sans-serif;
  text-align: right;
}
.service__label {
  font-size: 17px;
}
.qr {
  margin: 0 109px 0 7px;
}
.legal {
  display: flex;
  justify-content: center;
  padding: 9px 97px 17px 0;
  font-family: 'Liberation Sans', 'Noto Sans CJK SC', sans-serif;
}
.legal span + span {
  display: flex;
  align-items: center;
}
.legal span + span::before {
  content: '';
  width: 1px;
  height: 14px;
  margin: 0 11px 0 14px;
  background: #999;
}
.seals {
  display: block;
  margin: 0 auto;
  position: relative;
  right: 44px;
}
</style>
